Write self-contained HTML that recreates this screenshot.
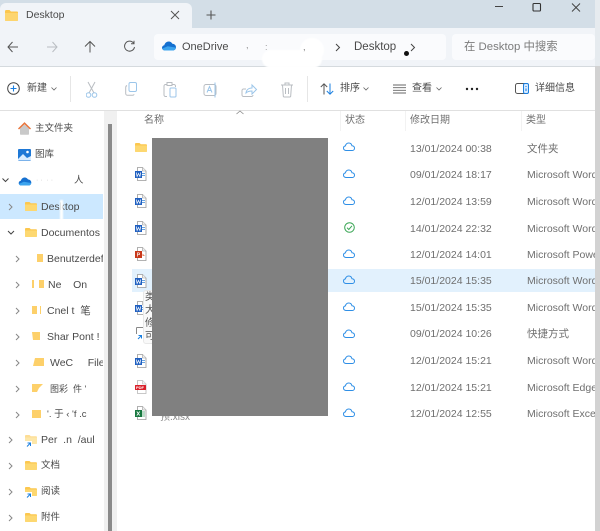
<!DOCTYPE html>
<html><head><meta charset="utf-8">
<style>
html,body{margin:0;padding:0;background:#fff}
#w{position:relative;width:600px;height:531px;overflow:hidden;background:#fff;font-family:"Liberation Sans","Noto Sans CJK SC",sans-serif;color:#444;filter:blur(.35px)}
#w div,#w svg,#w span{position:absolute}
.t{white-space:nowrap;font-size:10.5px;line-height:14px;color:#4a4a4a}
.g{color:#6f6f6f;font-size:10.5px;white-space:nowrap;line-height:14px}
.e{background:#fff;filter:blur(.8px)}
</style></head><body><div id="w">
<!-- chrome -->
<div style="left:0;top:0;width:595px;height:28px;background:#d3dee7"></div>
<div style="left:0;top:3px;width:192px;height:25px;background:#f1f4f8;border-radius:6px 6px 0 0"></div>
<div style="left:0;top:28px;width:595px;height:38px;background:#f1f4f8"></div>
<div style="left:0;top:66px;width:595px;height:1px;background:#d5dade"></div>
<div style="left:154px;top:34px;width:292px;height:26px;background:#fafbfd;border-radius:4px"></div>
<div style="left:452px;top:34px;width:143px;height:26px;background:#fafbfd;border-radius:4px"></div>
<div style="left:595px;top:0;width:5px;height:531px;background:#d2d2d2"></div>
<div style="left:595px;top:0;width:5px;height:66px;background:#e6ebef"></div>

<!-- tab -->
<svg style="left:5px;top:10px" width="13" height="11" viewBox="0 0 13 11"><path d="M0 1.2C0 .5.5 0 1.2 0h3.3l1.5 1.5h6c.6 0 1 .4 1 1V10c0 .6-.4 1-1 1H1c-.6 0-1-.4-1-1z" fill="#fcc74f"/><path d="M0 3h13v7c0 .6-.4 1-1 1H1c-.6 0-1-.4-1-1z" fill="#fdd56f"/></svg>
<div class="t" style="left:26px;top:8px;font-size:10.5px">Desktop</div>
<svg style="left:170px;top:10px" width="10" height="10" viewBox="0 0 10 10"><path d="M1 1l8 8M9 1l-8 8" stroke="#555" stroke-width="1" fill="none"/></svg>
<svg style="left:206px;top:10px" width="10" height="10" viewBox="0 0 10 10"><path d="M5 .5v9M.5 5h9" stroke="#555" stroke-width="1.1" fill="none"/></svg>
<!-- window controls -->
<svg style="left:495px;top:2px" width="100" height="12" viewBox="0 0 100 12"><path d="M0 4.500h8" stroke="#444" stroke-width="1"/><rect x="38" y="1.500" width="7.500" height="7.500" rx="1" fill="none" stroke="#333" stroke-width="1.100"/><path d="M77 1.500l8 8M85 1.500l-8 8" stroke="#444" stroke-width="1" fill="none"/></svg>

<!-- nav -->
<svg style="left:7px;top:40px" width="130" height="14" viewBox="0 0 130 14"><g fill="none" stroke-width="1"><path d="M1 7h10M5.500 2L1 7l4.500 5" stroke="#555"/><path d="M40 7h10M45.500 2l4.500 5-4.500 5" stroke="#b9bdc2"/><path d="M83 12.500V2M78 6.500L83 1.500l5 5" stroke="#555"/></g></svg>
<svg style="left:123px;top:40px" width="13" height="13" viewBox="0 0 13 13"><path d="M10.600 3.200A5 5 0 1 0 11.500 7" fill="none" stroke="#555" stroke-width="1"/><path d="M11 .8v3H8" fill="none" stroke="#555" stroke-width="1"/></svg>
<svg style="left:162px;top:41px" width="14" height="10" viewBox="0 0 14 10"><path d="M3 9.500C1.300 9.500 0 8.300 0 6.800c0-1.300 1-2.400 2.300-2.600C2.900 2 4.700.5 6.700.5c1.700 0 3 .9 3.700 2.300 2 0 3.600 1.500 3.600 3.400 0 1.900-1.500 3.300-3.400 3.300z" fill="#1570d0"/><path d="M3 9.500C1.600 9.500.6 8.700.2 7.600L5.700 5.300l8.200 1.300c-.2 1.700-1.600 2.900-3.300 2.900z" fill="#3ca4ee"/></svg>
<div class="t" style="left:182px;top:40px;font-size:11px">OneDrive</div>
<div class="e" style="left:262px;top:50px;width:60px;height:18px;border-radius:12px"></div>
<div class="e" style="left:300px;top:38px;width:24px;height:24px;border-radius:12px"></div>
<div class="t" style="left:246px;top:38px;font-size:9px;color:#8a8a8a">,</div>
<div class="t" style="left:265px;top:40px;font-size:9px;color:#999">:</div>
<div class="t" style="left:303px;top:40px;font-size:9px;color:#777">,</div>
<svg style="left:335px;top:43px" width="6" height="9" viewBox="0 0 6 9"><path d="M1 1l3.500 3.500L1 8" fill="none" stroke="#444" stroke-width="1"/></svg>
<div class="t" style="left:354px;top:40px;font-size:11.500px">Desktop</div>
<div style="left:404px;top:51px;width:5px;height:5px;border-radius:50%;background:#111"></div>
<svg style="left:410px;top:43px" width="6" height="9" viewBox="0 0 6 9"><path d="M1 1l3.500 3.500L1 8" fill="none" stroke="#444" stroke-width="1"/></svg>
<div class="t" style="left:464px;top:40px;font-size:11.400px;color:#7c7c7c">在 Desktop 中搜索</div>

<!-- toolbar -->
<svg style="left:7px;top:82px" width="13" height="13" viewBox="0 0 13 13"><circle cx="6.500" cy="6.500" r="5.800" fill="none" stroke="#444" stroke-width="1"/><path d="M6.500 3.500v6M3.500 6.500h6" stroke="#1a7fe0" stroke-width="1.100"/></svg>
<div class="t" style="left:27px;top:82px;font-size:10px">新建</div>
<svg style="left:51px;top:87px" width="6" height="4" viewBox="0 0 6 4"><path d="M.5.500l2.500 2.500L5.500.500" fill="none" stroke="#666" stroke-width=".8"/></svg>
<div style="left:70px;top:76px;width:1px;height:26px;background:#e6e6e6"></div>
<svg style="left:86px;top:81px" width="220" height="18" viewBox="0 0 220 18" fill="none" stroke-width="1">
<path d="M2 1l6 11M9 1L3 12" stroke="#b9bdc2"/><circle cx="2.500" cy="14" r="2.300" stroke="#9cc6ea"/><circle cx="8.500" cy="14" r="2.300" stroke="#9cc6ea"/>
<rect x="43" y="1.500" width="7.500" height="9" rx="1.500" stroke="#9cc6ea"/><path d="M41 4.500c-.8.300-1.300 1-1.300 2v6c0 1 .8 1.800 1.800 1.800h5c.8 0 1.400-.4 1.700-1" stroke="#b9bdc2"/>
<path d="M81 3.500h-1.500c-.8 0-1.500.7-1.500 1.500v9c0 .8.700 1.500 1.500 1.500H81M86 3.500h2c.8 0 1.500.700 1.500 1.500v1M81 1.500h5v3h-5z" stroke="#b9bdc2"/><rect x="84" y="7" width="6" height="9" rx="1" stroke="#9cc6ea"/>
<rect x="118" y="3.500" width="12" height="11" rx="2" stroke="#b9bdc2"/><path d="M121 11.500l2.500-6 2.500 6M122 9.500h3M129 1.500v15" stroke="#9cc6ea"/>
<path d="M160 8H157.500c-.8 0-1.500.7-1.500 1.500v4.500c0 .8.700 1.500 1.500 1.500h8c.8 0 1.500-.7 1.500-1.500" stroke="#b9bdc2"/><path d="M160 12c.3-3 2.500-5 6-5V4l4.500 4.500L166 13v-3c-2.500 0-4.500.5-6 2z" stroke="#9cc6ea"/>
<path d="M195 4h12M199 4V2h4v2M196.500 4l.8 11c0 .6.500 1 1.100 1h5.200c.6 0 1.100-.4 1.100-1l.8-11M199.500 7v6M202.500 7v6" stroke="#b9bdc2"/>
</svg>
<div style="left:307px;top:76px;width:1px;height:26px;background:#e6e6e6"></div>
<svg style="left:320px;top:83px" width="14" height="12" viewBox="0 0 14 12" fill="none" stroke-width="1"><path d="M4 11.500V1M.8 4L4 .8 7.200 4" stroke="#555"/><path d="M10 .5V11M6.800 8l3.200 3.200L13.200 8" stroke="#1a7fe0"/></svg>
<div class="t" style="left:340px;top:82px;font-size:10px">排序</div>
<svg style="left:363px;top:87px" width="6" height="4" viewBox="0 0 6 4"><path d="M.5.500l2.500 2.500L5.500.500" fill="none" stroke="#666" stroke-width=".8"/></svg>
<svg style="left:393px;top:84px" width="13" height="10" viewBox="0 0 13 10"><path d="M0 1h13M0 3.700h13M0 6.300h13M0 9h13" stroke="#666" stroke-width=".9"/></svg>
<div class="t" style="left:412px;top:82px;font-size:10px">查看</div>
<svg style="left:436px;top:87px" width="6" height="4" viewBox="0 0 6 4"><path d="M.5.500l2.500 2.500L5.500.500" fill="none" stroke="#666" stroke-width=".8"/></svg>
<svg style="left:465px;top:87px" width="14" height="4" viewBox="0 0 14 4"><circle cx="2" cy="2" r="1.200" fill="#222"/><circle cx="7" cy="2" r="1.200" fill="#222"/><circle cx="12" cy="2" r="1.200" fill="#222"/></svg>
<svg style="left:515px;top:83px" width="14" height="11" viewBox="0 0 14 11" fill="none"><rect x=".5" y=".5" width="13" height="10" rx="2" stroke="#555"/><rect x="8.500" y=".5" width="5" height="10" rx="1.500" stroke="#1a7fe0" fill="#d6eaff"/><path d="M11 3v1M11 5.500v2.500" stroke="#1a7fe0"/></svg>
<div class="t" style="left:535px;top:82px;font-size:10px">详细信息</div>
<div style="left:0;top:110px;width:595px;height:1px;background:#e0e0e0"></div>

<!-- sidebar scroll -->
<div style="left:104px;top:111px;width:13px;height:420px;background:#f0f0f0"></div>
<div style="left:108px;top:124px;width:4px;height:407px;background:#8a8a8a"></div>
<div style="left:0;top:194px;width:103px;height:25px;background:#cce8ff"></div>

<!-- sidebar icons & text -->
<svg style="left:18px;top:122px" width="13" height="13" viewBox="0 0 13 13"><path d="M2 6.500v5.500c0 .4.300.7.700.7h7.600c.4 0 .7-.3.700-.7V6.500L6.500 2.500z" fill="#c9c9c9"/><path d="M.5 7L6.500 1.200 12.500 7" fill="none" stroke="#e8743b" stroke-width="1.500"/></svg>
<div class="t" style="left:35px;top:122px;font-size:9.500px">主文件夹</div>
<svg style="left:18px;top:149px" width="13" height="12" viewBox="0 0 13 12"><rect width="13" height="12" rx="1" fill="#1e78d6"/><circle cx="9.500" cy="3" r="1.300" fill="#fff"/><path d="M0 10l5-5 4 4 4-2v4.500H0z" fill="#d8ecff"/></svg>
<div class="t" style="left:35px;top:148px;font-size:9.500px">图库</div>
<svg style="left:2px;top:178px" width="7" height="5" viewBox="0 0 7 5"><path d="M.5.500L3.500 3.500 6.500.500" fill="none" stroke="#444" stroke-width="1"/></svg>
<svg style="left:18px;top:177px" width="14" height="9" viewBox="0 0 14 10"><path d="M3 9.500C1.300 9.500 0 8.300 0 6.800c0-1.300 1-2.400 2.300-2.600C2.900 2 4.700.5 6.700.5c1.700 0 3 .9 3.700 2.300 2 0 3.600 1.500 3.600 3.400 0 1.900-1.500 3.300-3.400 3.300z" fill="#1570d0"/><path d="M3 9.500C1.600 9.500.6 8.700.2 7.600L5.700 5.300l8.200 1.300c-.2 1.700-1.600 2.900-3.300 2.900z" fill="#3ca4ee"/></svg>
<div class="t" style="left:36px;top:174px;color:#ccc;font-size:7px">· · &nbsp;· ·</div>
<div class="t" style="left:74px;top:174px;font-size:9.500px">人</div>

<svg style="left:0;top:0" width="104" height="531" viewBox="0 0 104 531" fill="none" stroke="#888" stroke-width="1">
<path d="M9 204l3 3-3 3M9 437l3 3-3 3M9 463l3 3-3 3M9 489l3 3-3 3M9 515l3 3-3 3M16 256l3 3-3 3M16 282l3 3-3 3M16 308l3 3-3 3M16 334l3 3-3 3M16 360l3 3-3 3M16 386l3 3-3 3M16 412l3 3-3 3"/>
<path d="M8 231l3 3 3-3" stroke="#444"/>
</svg>
<svg width="0" height="0" style="left:0;top:0"><defs><g id="f"><path d="M0 1c0-.6.4-1 1-1h3.500l1.300 1.300H11c.6 0 1 .4 1 1V8c0 .6-.4 1-1 1H1c-.6 0-1-.4-1-1z" fill="#fcc74f"/><path d="M0 2.500h12V8c0 .6-.4 1-1 1H1c-.6 0-1-.4-1-1z" fill="#fdd871"/></g></defs></svg>
<svg style="left:25px;top:202px" width="12" height="9"><use href="#f"/></svg>
<div class="t" style="left:41px;top:200px">Desktop</div>
<div class="e" style="left:60px;top:200px;width:3px;height:20px"></div>
<svg style="left:25px;top:228px" width="12" height="9"><use href="#f"/></svg>
<div class="t" style="left:41px;top:226px">Documentos</div>
<svg style="left:37px;top:254px" width="7" height="9"><path d="M0 0h6v8H0z" fill="#fdd06a"/></svg>
<div class="t" style="left:47px;top:252px;width:56px;overflow:hidden">Benutzerdef</div>
<svg style="left:32px;top:280px" width="12" height="9"><path d="M0 0h2v8H0zM7 0h5v8H7z" fill="#fdd06a"/></svg>
<div class="t" style="left:48px;top:278px;width:55px;overflow:hidden">Ne&nbsp; &nbsp;&nbsp;On</div>
<svg style="left:32px;top:306px" width="12" height="9"><path d="M0 0h5v8H0zM8 0h1v8H8z" fill="#fdd06a"/></svg>
<div class="t" style="left:47px;top:304px;width:56px;overflow:hidden">Cnel t &nbsp;笔</div>
<svg style="left:32px;top:332px" width="12" height="9"><path d="M0 0h8v8H1z" fill="#fdd06a"/></svg>
<div class="t" style="left:47px;top:330px;width:56px;overflow:hidden">Shar Pont !</div>
<svg style="left:33px;top:358px" width="12" height="9"><path d="M2 0h9v8H0z" fill="#fdd06a"/></svg>
<div class="t" style="left:50px;top:356px;width:53px;overflow:hidden">WeC &nbsp; &nbsp;&nbsp;File</div>
<svg style="left:32px;top:384px" width="12" height="9"><path d="M0 0h11L7 4 5 8H0z" fill="#fdd06a"/></svg>
<div class="t" style="left:50px;top:382px;width:53px;overflow:hidden;font-size:9px">图彩 &nbsp;件 '</div>
<svg style="left:32px;top:410px" width="12" height="9"><path d="M0 0h9v8H0z" fill="#fdd06a"/></svg>
<div class="t" style="left:47px;top:408px;width:56px;overflow:hidden;font-size:9.500px">'. 于 ‹ 'f .c</div>
<svg style="left:25px;top:435px" width="12" height="9"><use href="#f" opacity=".6"/></svg>
<svg style="left:25px;top:441px" width="7" height="7" viewBox="0 0 7 7"><rect width="7" height="7" fill="#fff"/><path d="M2 5.500L5 2.500M2.500 2h3v3" stroke="#1a7fe0" fill="none"/></svg>
<div class="t" style="left:41px;top:433px;width:62px;overflow:hidden">Per &nbsp;.n &nbsp;/aul</div>
<svg style="left:25px;top:461px" width="12" height="9"><use href="#f"/></svg>
<div class="t" style="left:41px;top:459px;font-size:9.500px">文档</div>
<svg style="left:25px;top:487px" width="12" height="9"><use href="#f"/></svg>
<svg style="left:25px;top:492px" width="7" height="7" viewBox="0 0 7 7"><rect width="7" height="7" fill="#fff"/><path d="M2 5.500L5 2.500M2.500 2h3v3" stroke="#1a7fe0" fill="none"/></svg>
<div class="t" style="left:41px;top:485px;font-size:9.500px">阅读</div>
<svg style="left:25px;top:513px" width="12" height="9"><use href="#f"/></svg>
<div class="t" style="left:41px;top:511px;font-size:9.500px">附件</div>

<!-- headers -->
<svg style="left:236px;top:110px" width="8" height="5" viewBox="0 0 8 5"><path d="M.5 4L4 1l3.500 3" fill="none" stroke="#888" stroke-width=".8"/></svg>
<div class="g" style="left:144px;top:114px;font-size:10px">名称</div>
<div class="g" style="left:345px;top:114px;font-size:10px">状态</div>
<div class="g" style="left:410px;top:114px;font-size:10px">修改日期</div>
<div class="g" style="left:526px;top:114px;font-size:10px">类型</div>
<div style="left:340px;top:111px;width:1px;height:20px;background:#f2f2f2"></div>
<div style="left:405px;top:111px;width:1px;height:20px;background:#f2f2f2"></div>
<div style="left:521px;top:111px;width:1px;height:20px;background:#f2f2f2"></div>

<!-- selected row -->
<div style="left:132px;top:269px;width:463px;height:23px;background:#e2f1fd"></div>

<!-- file icons -->
<svg width="0" height="0" style="left:0;top:0"><defs>
<g id="d"><path d="M2.500.500h5L11 4v9.500H2.500z" fill="#fff" stroke="#999" stroke-width=".8"/><path d="M7.500.500V4H11" fill="#eee" stroke="#999" stroke-width=".6"/></g>
<g id="wd"><use href="#d"/><path d="M7 6h3v1H7zM7 8h3v1H7z" fill="#6ba5e0"/><rect x="0" y="4" width="7" height="7" fill="#1f5fc0"/><path d="M1.300 5.500l.8 4 1.400-3 1.400 3 .8-4" stroke="#fff" stroke-width=".7" fill="none"/></g>
<path id="c" d="M3.300 8.500C1.700 8.500.5 7.500.5 6.100.5 5 1.300 4.100 2.400 3.900 2.900 2 4.200 1 5.700 1 7.300 1 8.600 2.100 8.900 3.700 10.400 3.800 11.500 4.800 11.500 6.200 11.500 7.500 10.400 8.500 9 8.500z" fill="none" stroke="#2f8fe6" stroke-width="1"/>
</defs></svg>
<svg style="left:135px;top:143px" width="12" height="9"><use href="#f"/></svg>
<svg style="left:135px;top:167px" width="12" height="14"><use href="#wd"/></svg>
<svg style="left:135px;top:194px" width="12" height="14"><use href="#wd"/></svg>
<svg style="left:135px;top:221px" width="12" height="14"><use href="#wd"/></svg>
<svg style="left:135px;top:247px" width="12" height="14"><use href="#d"/><rect x="0" y="4" width="7" height="7" fill="#c8391b"/><path d="M2.500 9.500V5.800h1.300c1.100 0 1.100 1.900 0 1.900H2.500" stroke="#fff" stroke-width=".7" fill="none"/><path d="M7.500 6.500l2.500 2.500H7.500z" fill="#e58a6d"/></svg>
<svg style="left:135px;top:274px" width="12" height="14"><use href="#wd"/></svg>
<svg style="left:135px;top:301px" width="12" height="14"><use href="#wd"/></svg>
<svg style="left:136px;top:327px" width="12" height="14"><path d="M.5.500h8" stroke="#888" fill="none"/><path d="M.5.500v8" stroke="#888" fill="none"/><rect y="7" width="7" height="7" fill="#fff"/><path d="M2 12l3-3M2.500 8.500h3v3" stroke="#1a7fe0" fill="none"/></svg>
<svg style="left:135px;top:354px" width="12" height="14"><use href="#wd"/></svg>
<svg style="left:135px;top:380px" width="12" height="14"><use href="#d" opacity=".7"/><rect x="0" y="5" width="11" height="5" rx=".5" fill="#d9202a"/><text x="1" y="9" font-size="4" font-weight="700" fill="#fff" font-family="Liberation Sans">PDF</text></svg>
<svg style="left:135px;top:406px" width="12" height="14"><use href="#d"/><path d="M7 6h3M7 8h3M7 10h3" stroke="#4aa06b" stroke-width=".8"/><rect x="0" y="4" width="7" height="7" fill="#17773f"/><path d="M1.800 5.500l3 4M4.800 5.500l-3 4" stroke="#fff" stroke-width=".8"/></svg>

<!-- tooltip -->
<div style="left:143px;top:290px;width:12px;height:54px;background:#f9f9f9;border:1px solid #e8e8e8;border-radius:3px;box-sizing:border-box"></div>
<div class="g" style="left:145px;top:291px;font-size:10px;line-height:13px;width:8px;overflow:hidden;white-space:normal;color:#555">类<br>大<br>修<br>可</div>

<!-- redaction -->
<div class="g" style="left:160px;top:411px;font-size:10px;color:#888">预.xlsx</div>
<div style="left:152px;top:138px;width:176px;height:278px;background:#808080"></div>

<!-- status -->
<svg style="left:343px;top:142px" width="13" height="10"><use href="#c"/></svg>
<svg style="left:343px;top:169px" width="13" height="10"><use href="#c"/></svg>
<svg style="left:343px;top:196px" width="13" height="10"><use href="#c"/></svg>
<svg style="left:344px;top:222px" width="11" height="11" viewBox="0 0 11 11"><circle cx="5.500" cy="5.500" r="4.800" fill="none" stroke="#3aa655"/><path d="M3 5.700l1.800 1.800L8 3.800" fill="none" stroke="#3aa655"/></svg>
<svg style="left:343px;top:249px" width="13" height="10"><use href="#c"/></svg>
<svg style="left:343px;top:275px" width="13" height="10"><use href="#c"/></svg>
<svg style="left:343px;top:302px" width="13" height="10"><use href="#c"/></svg>
<svg style="left:343px;top:329px" width="13" height="10"><use href="#c"/></svg>
<svg style="left:343px;top:355px" width="13" height="10"><use href="#c"/></svg>
<svg style="left:343px;top:382px" width="13" height="10"><use href="#c"/></svg>
<svg style="left:343px;top:408px" width="13" height="10"><use href="#c"/></svg>

<!-- dates -->
<div class="g" style="left:410px;top:142px">13/01/2024 00:38</div>
<div class="g" style="left:410px;top:168px">09/01/2024 18:17</div>
<div class="g" style="left:410px;top:195px">12/01/2024 13:59</div>
<div class="g" style="left:410px;top:222px">14/01/2024 22:32</div>
<div class="g" style="left:410px;top:248px">12/01/2024 14:01</div>
<div class="g" style="left:410px;top:274px">15/01/2024 15:35</div>
<div class="g" style="left:410px;top:301px">15/01/2024 15:35</div>
<div class="g" style="left:410px;top:327px">09/01/2024 10:26</div>
<div class="g" style="left:410px;top:354px">12/01/2024 15:21</div>
<div class="g" style="left:410px;top:381px">12/01/2024 15:21</div>
<div class="g" style="left:410px;top:407px">12/01/2024 12:55</div>

<!-- types -->
<div style="left:527px;top:131px;width:68px;height:300px;overflow:hidden">
<div class="g" style="left:0;top:11px">文件夹</div>
<div class="g" style="left:0;top:37px">Microsoft Word</div>
<div class="g" style="left:0;top:64px">Microsoft Word</div>
<div class="g" style="left:0;top:91px">Microsoft Word</div>
<div class="g" style="left:0;top:117px">Microsoft PowerPoint</div>
<div class="g" style="left:0;top:143px">Microsoft Word</div>
<div class="g" style="left:0;top:170px">Microsoft Word</div>
<div class="g" style="left:0;top:196px">快捷方式</div>
<div class="g" style="left:0;top:223px">Microsoft Word</div>
<div class="g" style="left:0;top:250px">Microsoft Edge</div>
<div class="g" style="left:0;top:276px">Microsoft Excel</div>
</div>
</div></body></html>
